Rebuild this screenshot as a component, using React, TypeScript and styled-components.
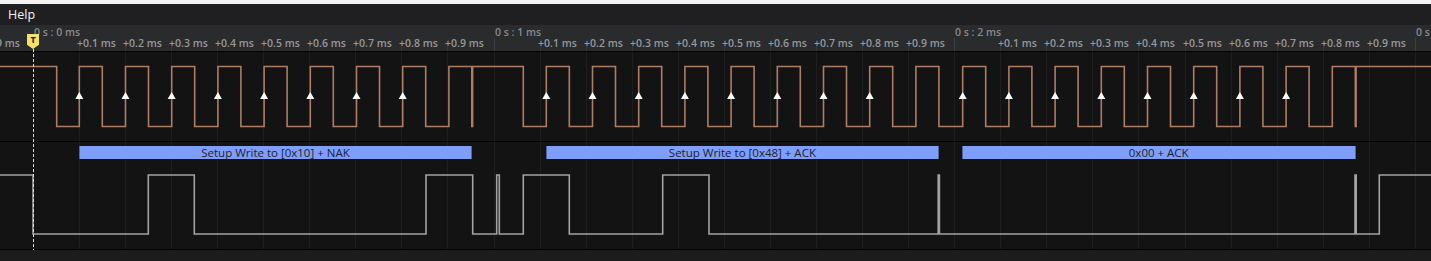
import React from "react";
import styled, { createGlobalStyle } from "styled-components";

// time axis: tick i = i * 0.1 ms
const X0 = 32.8;
const STEP = 46.07;
const W = 1431;
const tx = (i: number) => X0 + i * STEP;

const GlobalStyle = createGlobalStyle`
  html, body {
    margin: 0;
    padding: 0;
    background: #1c1c1c;
    overflow: hidden;
  }
  body {
    font-family: "Open Sans", "Noto Sans", "Liberation Sans", sans-serif;
  }
`;

const Window = styled.div`
  width: ${W}px;
  height: 261px;
  display: flex;
  flex-direction: column;
  background: #1c1c1c;
  overflow: hidden;
`;

const TitleStrip = styled.div`
  height: 4px;
  background: #f3f3f3;
`;

const MenuBar = styled.div`
  height: 21px;
  display: flex;
  align-items: center;
  padding-left: 8px;
  background: #1f1f21;
  color: #f2f2f2;
  font-size: 12.5px;
`;

const Timeline = styled.div`
  position: relative;
  display: flex;
  flex-direction: column;
`;

const Ruler = styled.div`
  position: relative;
  height: 26px;
  background: #2a2b2d;
  border-bottom: 1px solid #050505;
  overflow: hidden;
`;

const RulerLabel = styled.span<{ $major?: boolean }>`
  position: absolute;
  top: ${(p) => (p.$major ? 2 : 13)}px;
  font-size: 10.5px;
  line-height: 11px;
  font-weight: 600;
  white-space: nowrap;
  color: ${(p) => (p.$major ? "#88898c" : "#97989b")};
`;

const RulerTick = styled.div<{ $major?: boolean }>`
  position: absolute;
  bottom: 0;
  width: 1px;
  height: ${(p) => (p.$major ? 13 : 5)}px;
  background: ${(p) => (p.$major ? "#3d3e41" : "#38393c")};
`;

const Channel = styled.div<{ $h: number }>`
  position: relative;
  height: ${(p) => p.$h}px;
  background: #131313;
  border-bottom: 1px solid #050505;
  overflow: hidden;

  svg {
    display: block;
  }
`;

const Footer = styled.div`
  flex: 1;
  background: #1c1c1c;
`;

const ProtoBar = styled.div`
  position: absolute;
  top: 4px;
  height: 13px;
  box-sizing: border-box;
  display: flex;
  align-items: center;
  justify-content: center;
  background: #7f9ef8;
  border-left: 1px solid #52669b;
  border-right: 1px solid #52669b;
  color: #1b2233;
  font-size: 11.5px;
  line-height: 13px;
  white-space: nowrap;
  overflow: hidden;
`;

const TriggerMarker = styled.div`
  position: absolute;
  left: 27px;
  top: 9px;
  width: 12px;
  height: 15px;
  background: #f3e26a;
  clip-path: polygon(0 0, 100% 0, 100% 72%, 50% 100%, 0 72%);
  display: flex;
  justify-content: center;
  padding-top: 1px;
  box-sizing: border-box;
  color: #1a1a1a;
  font-size: 9px;
  font-weight: 700;
  line-height: 10px;
`;

const TriggerLine = styled.div`
  position: absolute;
  left: 33px;
  top: 24px;
  bottom: 0;
  width: 1px;
  background: repeating-linear-gradient(
    to bottom,
    #f5e65e 0 3px,
    transparent 3px 5px
  );
`;

// level path from toggle positions
function wavePath(toggles: number[], startHigh: boolean, hi: number, lo: number) {
  let level = startHigh;
  let d = `M0 ${level ? hi : lo}`;
  toggles.forEach((x) => {
    level = !level;
    d += ` H${x.toFixed(1)} V${level ? hi : lo}`;
  });
  d += ` H${W}`;
  return d;
}

const P = 46.2;
const byte1 = Array.from({ length: 9 }, (_, i) => 79.3 + P * i);
const byte2 = Array.from({ length: 9 }, (_, i) => 546.3 + P * i);
const byte3 = Array.from({ length: 9 }, (_, i) => 962.7 + P * i);

const sclToggles: number[] = [56.7];
byte1.forEach((r, i) => {
  sclToggles.push(r);
  if (i < 8) sclToggles.push(r + 23);
});
sclToggles.push(471.8, 472.6, 523.3);
byte2.forEach((r) => sclToggles.push(r, r + 23));
byte3.forEach((r, i) => {
  sclToggles.push(r);
  if (i < 8) sclToggles.push(r + 23);
});
sclToggles.push(1355.3, 1356.1);

const arrows = [...byte1.slice(0, 8), ...byte2.slice(0, 8), ...byte3.slice(0, 8)];

const sdaToggles = [
  33, 148.3, 194.3, 426, 472.7, 496.7, 499.3, 523.3, 569.3, 662.7, 709, 938.2,
  939.4, 1355, 1356.2, 1379.3,
];

const frames = [
  { from: 78.7, to: 472.3, text: "Setup Write to [0x10] + NAK" },
  { from: 545.5, to: 939.3, text: "Setup Write to [0x48] + ACK" },
  { from: 961.7, to: 1355.8, text: "0x00 + ACK" },
];

const ticks = Array.from({ length: 33 }, (_, k) => k - 1);

function Grid({ h }: { h: number }) {
  return (
    <>
      {ticks.map((i) => {
        const x = Math.round(tx(i)) + 0.5;
        return <line key={i} x1={x} x2={x} y1={0} y2={h} stroke="#1e1e1e" strokeWidth={1} />;
      })}
    </>
  );
}

function TimeRuler() {
  return (
    <Ruler>
      {ticks.map((i) => {
        const x = Math.round(tx(i));
        const major = i % 10 === 0;
        const ms = Math.floor(i / 10);
        const sub = ((i % 10) + 10) % 10;
        return (
          <React.Fragment key={i}>
            <RulerTick $major={major} style={{ left: x }} />
            {major ? (
              <RulerLabel $major style={{ left: x + 1 }}>
                0 s : {ms} ms
              </RulerLabel>
            ) : (
              <RulerLabel style={{ left: x - (i < 0 ? 6 : 2) }}>+0.{sub} ms</RulerLabel>
            )}
          </React.Fragment>
        );
      })}
    </Ruler>
  );
}

export default function App() {
  return (
    <>
      <GlobalStyle />
      <Window>
        <TitleStrip />
        <MenuBar>Help</MenuBar>
        <Timeline>
          <TimeRuler />
          <Channel $h={89}>
            <svg width={W} height={89}>
              <Grid h={89} />
              <path
                d={wavePath(sclToggles, true, 14.5, 74.5)}
                fill="none"
                stroke="#ad7d66"
                strokeWidth={1.6}
              />
              {arrows.map((x, i) => (
                <polygon
                  key={i}
                  points={`${x - 4},47 ${x + 4},47 ${x},40`}
                  fill="#ffffff"
                />
              ))}
            </svg>
          </Channel>
          <Channel $h={107}>
            <svg width={W} height={107}>
              <Grid h={107} />
              <path
                d={wavePath(sdaToggles, true, 33, 92)}
                fill="none"
                stroke="#a3a3a3"
                strokeWidth={1.6}
              />
            </svg>
            {frames.map((f) => (
              <ProtoBar key={f.text} style={{ left: f.from, width: f.to - f.from }}>
                {f.text}
              </ProtoBar>
            ))}
          </Channel>
          <TriggerLine />
          <TriggerMarker>T</TriggerMarker>
        </Timeline>
        <Footer />
      </Window>
    </>
  );
}
